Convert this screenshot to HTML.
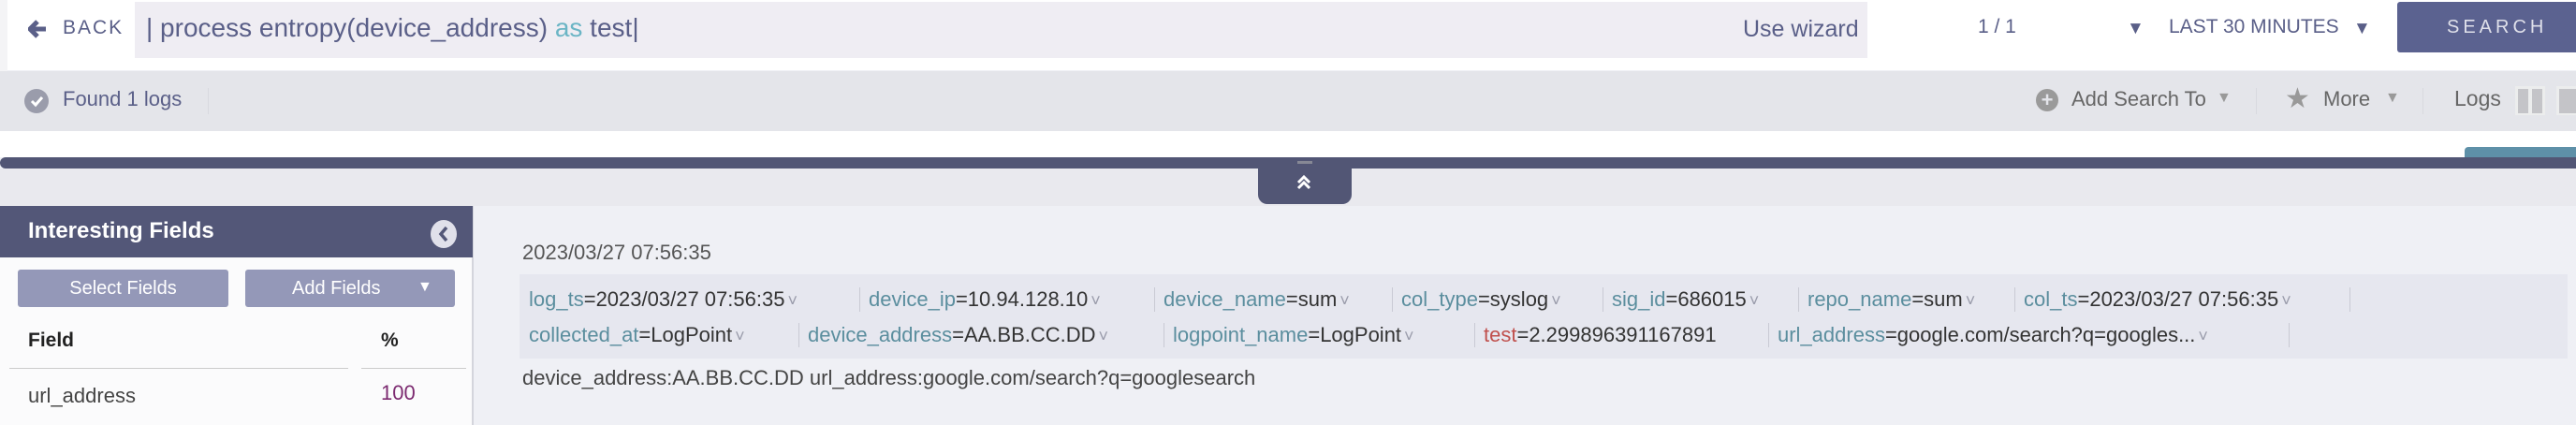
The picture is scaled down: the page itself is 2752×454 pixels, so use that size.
<!DOCTYPE html>
<html><head><meta charset="utf-8"><style>
*{margin:0;padding:0;box-sizing:border-box}
body{width:2752px;height:454px;overflow:hidden;background:#eff0f5;font-family:"Liberation Sans",sans-serif;position:relative}
.a{position:absolute;white-space:nowrap}
.k{color:#5b8e9e}.v{color:#333}.ch{color:#9a9cab;font-size:18px;margin-left:3px}
.seg{position:absolute;height:30px;line-height:30px;font-size:22px;white-space:nowrap}
.sep{position:absolute;top:2px;width:1px;height:26px;background:#c9cad4}
</style></head><body>
<div class="a" style="left:0;top:0;width:2752px;height:75px;background:#fff"></div>
<div class="a" style="left:0;top:0;width:8px;height:140px;background:#f4f4f6"></div>
<svg class="a" style="left:30px;top:21px" width="22" height="20" viewBox="0 0 22 20"><path d="M10 2 L2 10 L10 18 M3 10 H19" stroke="#5a5f88" stroke-width="5" fill="none" stroke-linejoin="round"/></svg>
<div class="a" style="left:67px;top:18px;font-size:21px;letter-spacing:2px;color:#5a5f88">BACK</div>
<div class="a" style="left:144px;top:2px;width:1851px;height:60px;background:#efedf3"></div>
<div class="a" style="left:156px;top:14px;font-size:28px;color:#5a5f88">| process entropy(device_address) <span style="color:#6bb5c5">as</span> test|</div>
<div class="a" style="left:1862px;top:17px;font-size:25px;color:#5a5f88">Use wizard</div>
<div class="a" style="left:2113px;top:17px;font-size:21px;color:#5a5f88">1 / 1</div>
<div class="a" style="left:2272px;top:20px;font-size:19px;color:#5a5f88">▼</div>
<div class="a" style="left:2317px;top:17px;font-size:21px;color:#5a5f88">LAST 30 MINUTES</div>
<div class="a" style="left:2514px;top:20px;font-size:19px;color:#5a5f88">▼</div>
<div class="a" style="left:2561px;top:2px;width:191px;height:54px;background:#5b6290;border-radius:3px 0 0 3px;color:#dfe0ea;font-size:20px;letter-spacing:4px;line-height:54px;padding-left:53px">SEARCH</div>
<div class="a" style="left:0;top:76px;width:2752px;height:64px;background:#e4e5ea"></div>
<div class="a" style="left:26px;top:95px;width:26px;height:26px;border-radius:50%;background:#9a9cab"></div>
<svg class="a" style="left:26px;top:95px" width="26" height="26"><path d="M8 13 L12 17 L19 9" stroke="#fff" stroke-width="3" fill="none"/></svg>
<div class="a" style="left:67px;top:93px;font-size:22px;color:#5a5f88">Found 1 logs</div>
<div class="a" style="left:222px;top:94px;width:1px;height:28px;background:#d8d9df"></div>
<div class="a" style="left:2175px;top:95px;width:24px;height:24px;border-radius:50%;background:#9a9a9a;color:#e4e5ea;font-size:22px;line-height:24px;text-align:center;font-weight:bold">+</div>
<div class="a" style="left:2213px;top:93px;font-size:22px;color:#666">Add Search To</div>
<div class="a" style="left:2368px;top:96px;font-size:16px;color:#999">▼</div>
<div class="a" style="left:2410px;top:94px;width:1px;height:28px;background:#d8d9df"></div>
<div class="a" style="left:2441px;top:88px;font-size:30px;color:#999">★</div>
<div class="a" style="left:2482px;top:93px;font-size:22px;color:#666">More</div>
<div class="a" style="left:2548px;top:96px;font-size:16px;color:#999">▼</div>
<div class="a" style="left:2588px;top:94px;width:1px;height:28px;background:#d8d9df"></div>
<div class="a" style="left:2622px;top:92px;font-size:23px;color:#666">Logs</div>
<div class="a" style="left:2687px;top:92px;width:32px;height:31px;background:#eceded"></div>
<div class="a" style="left:2690px;top:95px;width:11px;height:26px;background:#c4c4c8"></div>
<div class="a" style="left:2705px;top:95px;width:11px;height:26px;background:#c4c4c8"></div>
<div class="a" style="left:2731px;top:92px;width:21px;height:31px;background:#eceded"></div>
<div class="a" style="left:2734px;top:95px;width:18px;height:26px;background:#c4c4c8"></div>
<div class="a" style="left:0;top:140px;width:2752px;height:28px;background:#fff"></div>
<div class="a" style="left:2633px;top:157px;width:119px;height:12px;background:#5e90a8;border-radius:4px 0 0 0"></div>
<div class="a" style="left:0;top:168px;width:2752px;height:12px;background:#525675;border-radius:6px 0 0 6px"></div>
<div class="a" style="left:0;top:180px;width:2752px;height:40px;background:#e9e9ee"></div>
<div class="a" style="left:1344px;top:168px;width:100px;height:50px;background:#525675;border-radius:0 0 10px 10px"></div>
<div class="a" style="left:1386px;top:172px;width:16px;height:3px;background:#aaa;opacity:.6"></div>
<svg class="a" style="left:1383px;top:186px" width="20" height="18"><path d="M4 9 L10 3 L16 9 M4 15 L10 9 L16 15" stroke="#fff" stroke-width="3" fill="none"/></svg>
<div class="a" style="left:0;top:220px;width:506px;height:234px;background:#fbfbfc;border-right:2px solid #d4d5dc"></div>
<div class="a" style="left:0;top:220px;width:505px;height:55px;background:#535778"></div>
<div class="a" style="left:30px;top:233px;font-size:24px;font-weight:bold;color:#fff">Interesting Fields</div>
<div class="a" style="left:460px;top:235px;width:28px;height:30px;border-radius:50%;background:#e0e0ea"></div>
<svg class="a" style="left:460px;top:235px" width="28" height="30"><path d="M17 8 L11 15 L17 22" stroke="#535778" stroke-width="3.5" fill="none"/></svg>
<div class="a" style="left:19px;top:288px;width:225px;height:40px;background:#9498b8;border-radius:3px;color:#fff;font-size:20px;line-height:40px;text-align:center">Select Fields</div>
<div class="a" style="left:262px;top:288px;width:224px;height:40px;background:#9498b8;border-radius:3px;color:#fff;font-size:20px;line-height:40px;padding-left:50px">Add Fields</div>
<div class="a" style="left:446px;top:298px;font-size:16px;color:#fff">▼</div>
<div class="a" style="left:30px;top:352px;font-size:21px;font-weight:bold;color:#222">Field</div>
<div class="a" style="left:407px;top:352px;font-size:21px;font-weight:bold;color:#222">%</div>
<div class="a" style="left:10px;top:393px;width:362px;height:1px;background:#ccc"></div>
<div class="a" style="left:386px;top:393px;width:112px;height:1px;background:#ccc"></div>
<div class="a" style="left:30px;top:410px;font-size:22px;color:#444">url_address</div>
<div class="a" style="left:407px;top:407px;font-size:22px;color:#7c2a70">100</div>
<div class="a" style="left:558px;top:257px;font-size:22px;color:#555">2023/03/27 07:56:35</div>
<div class="a" style="left:555px;top:293px;width:2188px;height:90px;background:#e6e7ef"></div>
<div class="seg" style="left:565px;top:305px"><span class="k">log_ts</span><span class="v">=2023/03/27 07:56:35</span><span class="ch">˅</span></div>
<div class="sep" style="left:918px;top:307px"></div>
<div class="seg" style="left:928px;top:305px"><span class="k">device_ip</span><span class="v">=10.94.128.10</span><span class="ch">˅</span></div>
<div class="sep" style="left:1233px;top:307px"></div>
<div class="seg" style="left:1243px;top:305px"><span class="k">device_name</span><span class="v">=sum</span><span class="ch">˅</span></div>
<div class="sep" style="left:1487px;top:307px"></div>
<div class="seg" style="left:1497px;top:305px"><span class="k">col_type</span><span class="v">=syslog</span><span class="ch">˅</span></div>
<div class="sep" style="left:1712px;top:307px"></div>
<div class="seg" style="left:1722px;top:305px"><span class="k">sig_id</span><span class="v">=686015</span><span class="ch">˅</span></div>
<div class="sep" style="left:1921px;top:307px"></div>
<div class="seg" style="left:1931px;top:305px"><span class="k">repo_name</span><span class="v">=sum</span><span class="ch">˅</span></div>
<div class="sep" style="left:2152px;top:307px"></div>
<div class="seg" style="left:2162px;top:305px"><span class="k">col_ts</span><span class="v">=2023/03/27 07:56:35</span><span class="ch">˅</span></div>
<div class="sep" style="left:2510px;top:307px"></div>
<div class="seg" style="left:565px;top:343px"><span class="k">collected_at</span><span class="v">=LogPoint</span><span class="ch">˅</span></div>
<div class="sep" style="left:853px;top:345px"></div>
<div class="seg" style="left:863px;top:343px"><span class="k">device_address</span><span class="v">=AA.BB.CC.DD</span><span class="ch">˅</span></div>
<div class="sep" style="left:1243px;top:345px"></div>
<div class="seg" style="left:1253px;top:343px"><span class="k">logpoint_name</span><span class="v">=LogPoint</span><span class="ch">˅</span></div>
<div class="sep" style="left:1575px;top:345px"></div>
<div class="seg" style="left:1585px;top:343px"><span style="color:#c0504d">test</span><span class="v">=2.299896391167891</span></div>
<div class="sep" style="left:1889px;top:345px"></div>
<div class="seg" style="left:1899px;top:343px"><span class="k">url_address</span><span class="v">=google.com/search?q=googles...</span><span class="ch">˅</span></div>
<div class="sep" style="left:2445px;top:345px"></div>
<div class="a" style="left:558px;top:391px;font-size:22px;color:#444">device_address:AA.BB.CC.DD url_address:google.com/search?q=googlesearch</div>
</body></html>
